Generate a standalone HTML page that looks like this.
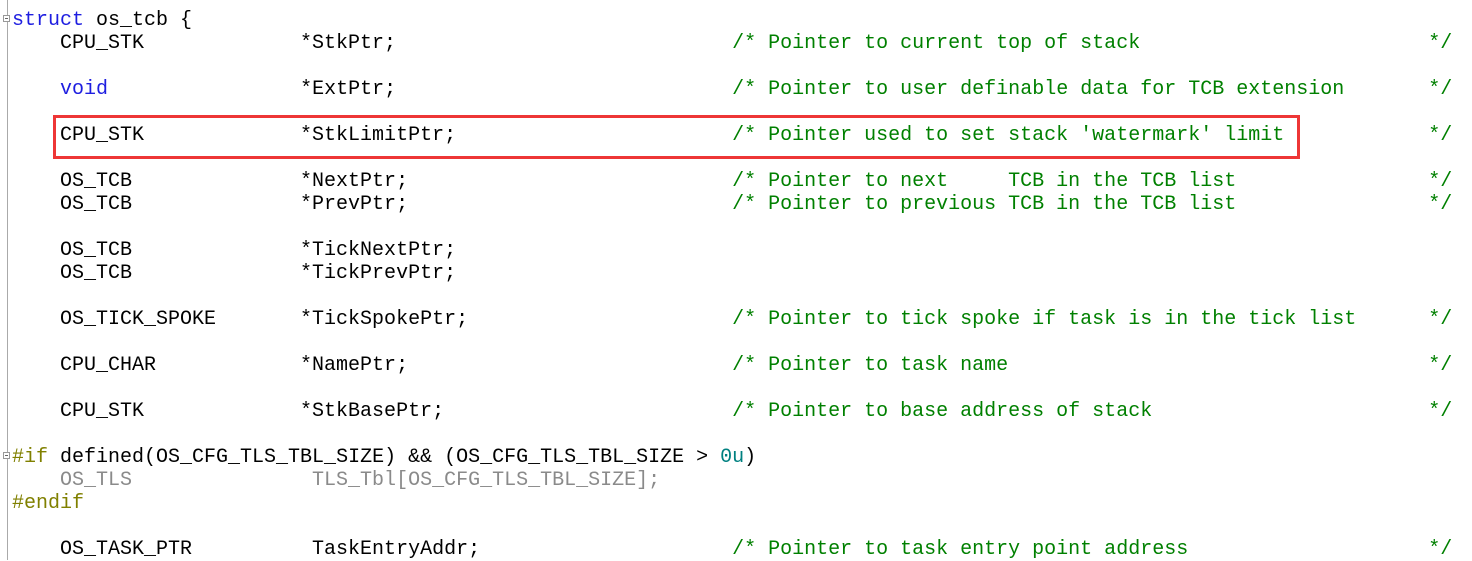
<!DOCTYPE html>
<html><head><meta charset="utf-8"><style>
html,body{margin:0;padding:0;background:#fff;width:1472px;height:560px;overflow:hidden}
pre{position:absolute;left:12px;top:9px;margin:0;font-family:"Liberation Mono","Courier New",monospace;font-size:20px;line-height:23px;color:#000}
.k{color:#1e1ee0}.c{color:#008000}.p{color:#808000}.g{color:#8a8a8a}.n{color:#008080}
.gut{position:absolute;left:7px;top:0;width:1px;height:560px;background:#aaa}
.fold{position:absolute;left:3px;width:7px;height:7px;border:1px solid #999;background:#fff;box-sizing:border-box}
.fold:after{content:"";position:absolute;left:1px;top:2px;width:3px;height:1px;background:#666}
.box{position:absolute;left:53px;top:115px;width:1247px;height:44px;border:3px solid #ee3636;box-sizing:border-box}
</style></head><body>
<div class="gut"></div>
<div class="fold" style="top:15px"></div>
<div class="fold" style="top:452px"></div>
<pre><span class="k">struct</span> os_tcb {
    CPU_STK             *StkPtr;                            <span class="c">/* Pointer to current top of stack                        */</span>

    <span class="k">void</span>                *ExtPtr;                            <span class="c">/* Pointer to user definable data for TCB extension       */</span>

    CPU_STK             *StkLimitPtr;                       <span class="c">/* Pointer used to set stack 'watermark' limit            */</span>

    OS_TCB              *NextPtr;                           <span class="c">/* Pointer to next     TCB in the TCB list                */</span>
    OS_TCB              *PrevPtr;                           <span class="c">/* Pointer to previous TCB in the TCB list                */</span>

    OS_TCB              *TickNextPtr;
    OS_TCB              *TickPrevPtr;

    OS_TICK_SPOKE       *TickSpokePtr;                      <span class="c">/* Pointer to tick spoke if task is in the tick list      */</span>

    CPU_CHAR            *NamePtr;                           <span class="c">/* Pointer to task name                                   */</span>

    CPU_STK             *StkBasePtr;                        <span class="c">/* Pointer to base address of stack                       */</span>

<span class="p">#if</span> defined(OS_CFG_TLS_TBL_SIZE) &amp;&amp; (OS_CFG_TLS_TBL_SIZE &gt; <span class="n">0u</span>)
<span class="g">    OS_TLS               TLS_Tbl[OS_CFG_TLS_TBL_SIZE];</span>
<span class="p">#endif</span>

    OS_TASK_PTR          TaskEntryAddr;                     <span class="c">/* Pointer to task entry point address                    */</span>
</pre>
<div class="box"></div>
</body></html>
